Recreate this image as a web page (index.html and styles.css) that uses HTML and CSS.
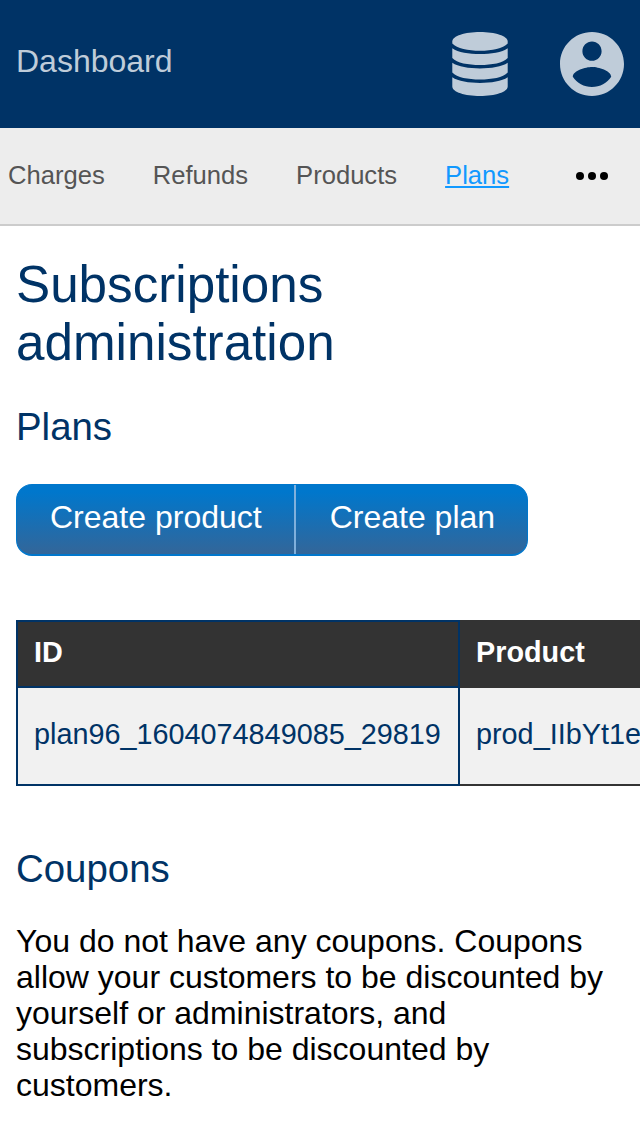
FILE: index.html
```html
<!DOCTYPE html>
<html lang="en">
<head>
<meta charset="utf-8">
<title>Subscriptions administration</title>
<link rel="stylesheet" href="styles.css">
</head>
<body>
<header class="topbar">
  <a class="brand">Dashboard</a>
  <div class="menus">
    <svg class="icon-db" viewBox="0 0 56 64"><path d="M28 0C43 0 55.700 4 55.700 9.500V11.500C51 16.500 40 18.800 28 18.800S5 16.500.300 11.500V9.500C.300 4 13 0 28 0z"/><path d="M.300 16.200C6 20.300 17 22 28 22S50 20.300 55.700 16.200V26C51 31 40 33 28 33S5 31 .300 26z"/><path d="M.300 30.700C6 34.700 17 36.400 28 36.400S50 34.700 55.700 30.700V40.500C51 45.500 40 47.500 28 47.500S5 45.500 .300 40.500z"/><path d="M.300 45.300C6 49.300 17 51 28 51S50 49.300 55.700 45.300V54.500C55.700 60 43 64 28 64S.300 60 .300 54.500z"/></svg>
    <svg class="icon-user" viewBox="2 2 20 20"><path d="M12 2C6.480 2 2 6.480 2 12s4.480 10 10 10 10-4.480 10-10S17.520 2 12 2zm0 3c1.660 0 3 1.340 3 3s-1.340 3-3 3-3-1.340-3-3 1.340-3 3-3zm0 14.200c-2.500 0-4.710-1.280-6-3.220.030-1.990 4-3.080 6-3.080 1.990 0 5.970 1.090 6 3.080-1.290 1.940-3.500 3.220-6 3.220z"/></svg>
  </div>
</header>
<nav class="tabs">
  <a>Charges</a><a>Refunds</a><a>Products</a><a class="current">Plans</a>
  <svg class="more" viewBox="0 0 32 8"><circle cx="4" cy="4" r="4"/><circle cx="16" cy="4" r="4"/><circle cx="28" cy="4" r="4"/></svg>
</nav>
<main class="content">
  <h1>Subscriptions administration</h1>
  <h2>Plans</h2>
  <div class="buttons"><a>Create product</a><a>Create plan</a></div>
  <div class="table-wrap">
    <table class="plans">
      <thead><tr><th>ID</th><th>Product</th></tr></thead>
      <tbody><tr><td>plan96_1604074849085_29819</td><td>prod_IIbYt1e</td></tr></tbody>
    </table>
  </div>
  <h2 class="coupons">Coupons</h2>
  <p>You do not have any coupons. Coupons allow your customers to be discounted by yourself or administrators, and subscriptions to be discounted by customers.</p>
</main>
</body>
</html>
```
FILE: styles.css
```css
* { box-sizing: border-box; }
html { overflow: hidden; }
body {
  margin: 0;
  height: 1136px;
  overflow: hidden;
  background: #fff;
  color: #000;
  font: 32px/36px "Liberation Sans", Arial, sans-serif;
}
.topbar {
  display: flex;
  justify-content: space-between;
  height: 128px;
  padding: 32px 16px;
  background: #003366;
  color: #bfccd9;
}
.brand { padding-top: 11px; }
.menus { display: flex; gap: 52px; }
.menus svg { display: block; height: 64px; fill: #bfccd9; }
.icon-db { width: 56px; }
.icon-user { width: 64px; }
.tabs {
  display: flex;
  gap: 48px;
  height: 98px;
  padding: 32px 32px 0 8px;
  background: #ededed;
  border-bottom: 2px solid #ccc;
  color: #555;
  font-size: 25.6px;
  line-height: 30px;
}
.tabs .current { color: #1199ff; text-decoration: underline; }
.more { width: 32px; height: 8px; margin: 12px 0 0 auto; }
.content { padding: 30px 0 0 16px; }
h1, h2 { margin: 0; color: #003366; font-weight: normal; }
h1 { width: 400px; font-size: 51.2px; line-height: 58px; }
h2 { margin-top: 33px; font-size: 38.4px; line-height: 44px; }
.buttons {
  display: flex;
  width: 512px;
  height: 72px;
  margin-top: 35px;
  padding-left: 1px;
  border: 1px solid #0077cc;
  border-bottom-width: 2px;
  border-radius: 16px;
  background: linear-gradient(#0077cc 10%, #336699);
  color: #fff;
}
.buttons a { padding: 14px 32px; white-space: nowrap; }
.buttons a + a { border-left: 2px solid #80b0dc; padding-left: 34px; }
.table-wrap { margin-top: 64px; overflow: hidden; }
.plans {
  width: 900px;
  border-collapse: collapse;
  table-layout: fixed;
  font-size: 28.8px;
  text-align: left;
  color: #003366;
}
.plans th, .plans td { padding: 0 16px; border: 2px solid #333; }
.plans th { height: 66px; background: #333; color: #fff; padding-bottom: 4px; }
.plans td { height: 98px; background: #f1f1f1; padding-bottom: 4px; }
.plans th:first-child, .plans td:first-child { width: 442px; border-color: #003366; }
.coupons { margin-top: 61px; }
p { width: 608px; margin: 32px 0 0; }
```
